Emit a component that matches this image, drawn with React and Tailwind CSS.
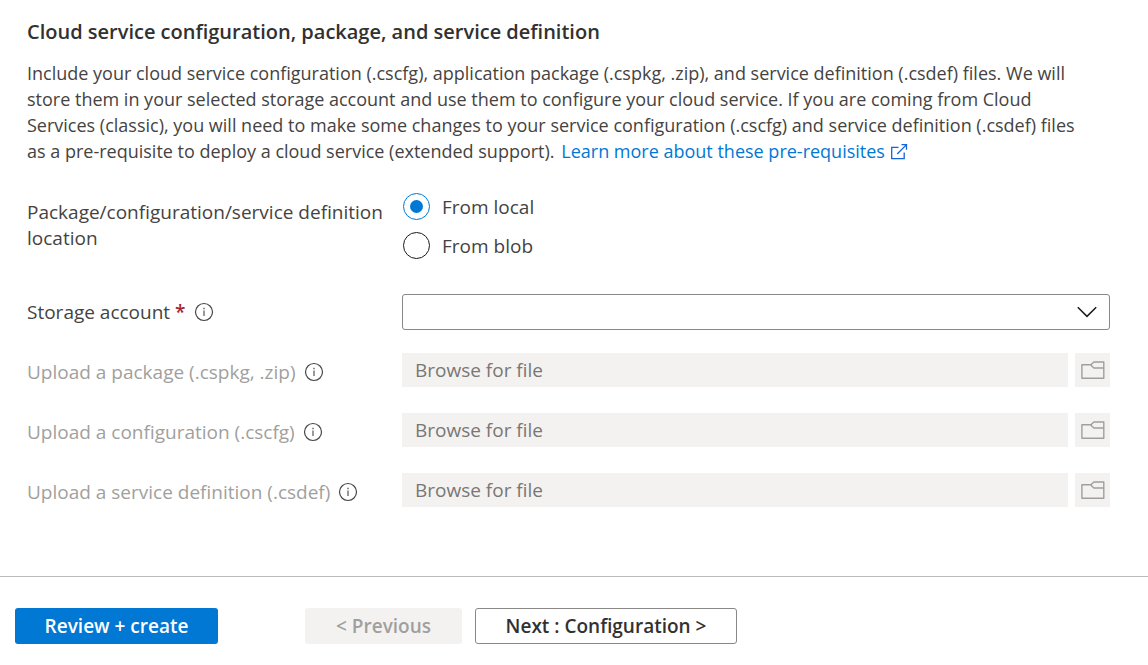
import { useState } from "react";

function InfoIcon() {
  return (
    <svg className="h-5 w-5 shrink-0 text-[#484644]" viewBox="0 0 20 20" fill="none" stroke="currentColor" aria-hidden="true">
      <circle cx="10" cy="10" r="8.5" strokeWidth="1.2" />
      <path d="M10 8.6v5.4" strokeWidth="1.1" />
      <path d="M10 5.8v1.5" strokeWidth="1.2" />
    </svg>
  );
}

function ExternalIcon() {
  return (
    <svg className="inline-block h-[18px] w-[18px] align-[-3px] text-[#1565d8]" viewBox="0 0 18 18" fill="none" stroke="currentColor" strokeWidth="1.3" aria-hidden="true">
      <path d="M8.5 4.3H1.7v11.4h12.5V9.5M11.5 1.7h5v5M16.3 1.9 7.2 11" />
    </svg>
  );
}

function FolderIcon() {
  return (
    <svg className="h-5 w-6" viewBox="0 0 24 20" fill="none" stroke="currentColor" strokeWidth="1.4" aria-hidden="true">
      <path d="M10.4 4.7H.9v13.6h21.9V2H12.9l-2.5 2.3v1.4L12.9 8h9.9" strokeLinejoin="round" />
    </svg>
  );
}

function RadioOption({ label, value, checked, onChange }) {
  return (
    <label className="flex h-[27px] items-center gap-3">
      <input
        type="radio"
        name="location"
        value={value}
        checked={checked}
        onChange={() => onChange(value)}
        className="flex h-[27px] w-[27px] shrink-0 appearance-none items-center justify-center rounded-full border border-[#1b1a19] bg-white checked:border-[#0078d4] checked:before:block checked:before:h-[13px] checked:before:w-[13px] checked:before:rounded-full checked:before:bg-[#0078d4] checked:before:content-['']"
      />
      {label}
    </label>
  );
}

function UploadRow({ id, label }) {
  return (
    <div className="flex items-center">
      <div className="flex w-[375px] shrink-0 items-center gap-2 pt-[3px]">
        <label htmlFor={id} className="whitespace-nowrap text-[#a19f9d]">{label}</label>
        <InfoIcon />
      </div>
      <div className="flex flex-1 gap-[7px]">
        <input
          id={id}
          type="text"
          disabled
          placeholder="Browse for file"
          className="h-[34px] min-w-0 flex-1 bg-[#f3f2f1] px-[13px] placeholder:text-[#797775]"
        />
        <button type="button" disabled aria-label="Browse" className="flex h-[34px] w-[35px] items-center justify-center bg-[#f3f2f1] text-[#a19f9d]">
          <FolderIcon />
        </button>
      </div>
    </div>
  );
}

const uploads = [
  { id: "package", label: "Upload a package (.cspkg, .zip)" },
  { id: "configuration", label: "Upload a configuration (.cscfg)" },
  { id: "definition", label: "Upload a service definition (.csdef)" },
];

export default function App() {
  const [location, setLocation] = useState("local");
  return (
    <div className="min-h-screen bg-white font-['Open_Sans','Noto_Sans',sans-serif] text-[19px] leading-[26px] text-[#444342]">
      <main className="pr-[38px] pb-[69px] pl-[27px] pt-[19px]">
        <h2 className="text-[20px] font-semibold text-[#323130]">Cloud service configuration, package, and service definition</h2>
        <p className="mt-[15px] text-[18px]">
          Include your cloud service configuration (.cscfg), application package (.cspkg, .zip), and service definition (.csdef) files. We will store them in your selected storage account and use them to configure your cloud service. If you are coming from Cloud
          <br />
          Services (classic), you will need to make some changes to your service configuration (.cscfg) and service definition (.csdef) files
          <br />
          as a pre-requisite to deploy a cloud service (extended support).{" "}
          <a href="#prerequisites" className="ml-0.5 text-[#0078d4]">
            Learn more about these pre-requisites <ExternalIcon />
          </a>
        </p>

        <div role="radiogroup" aria-labelledby="location-label" className="mt-[29px] flex">
          <div id="location-label" className="w-[375px] shrink-0 pt-[6px]">
            Package/configuration/service definition location
          </div>
          <div className="flex flex-col gap-3 pl-px">
            <RadioOption label="From local" value="local" checked={location === "local"} onChange={setLocation} />
            <RadioOption label="From blob" value="blob" checked={location === "blob"} onChange={setLocation} />
          </div>
        </div>

        <div className="mt-[35px] flex items-center">
          <div className="flex w-[375px] shrink-0 items-center gap-2">
            <label htmlFor="storage">
              Storage account <span className="font-semibold text-[#a4262c]">*</span>
            </label>
            <InfoIcon />
          </div>
          <div className="relative flex-1">
            <select id="storage" defaultValue="" className="block h-9 w-full appearance-none rounded-[3px] border border-[#8a8886] bg-white px-3">
              <option value=""></option>
            </select>
            <svg className="pointer-events-none absolute top-3 right-[13px] h-3 w-5 text-[#1b1a19]" viewBox="0 0 20 12" fill="none" stroke="currentColor" strokeWidth="1.5" aria-hidden="true">
              <path d="m.8 1.2 9.2 9.2 9.2-9.2" />
            </svg>
          </div>
        </div>

        <div className="mt-[23px] flex flex-col gap-[26px]">
          {uploads.map((u) => (
            <UploadRow key={u.id} id={u.id} label={u.label} />
          ))}
        </div>
      </main>

      <footer className="flex border-t border-[#bdbbb9] px-[15px] py-[31px] font-semibold">
        <button type="button" className="h-9 w-[203px] rounded-[3px] bg-[#0078d4] text-white">Review + create</button>
        <button type="button" disabled className="ml-[87px] h-9 w-[157px] rounded-[3px] bg-[#f3f2f1] text-[#a19f9d]">&lt; Previous</button>
        <button type="button" className="ml-[13px] h-9 w-[262px] rounded-[3px] border border-[#8a8886] bg-white text-[#323130]">Next : Configuration &gt;</button>
      </footer>
    </div>
  );
}
